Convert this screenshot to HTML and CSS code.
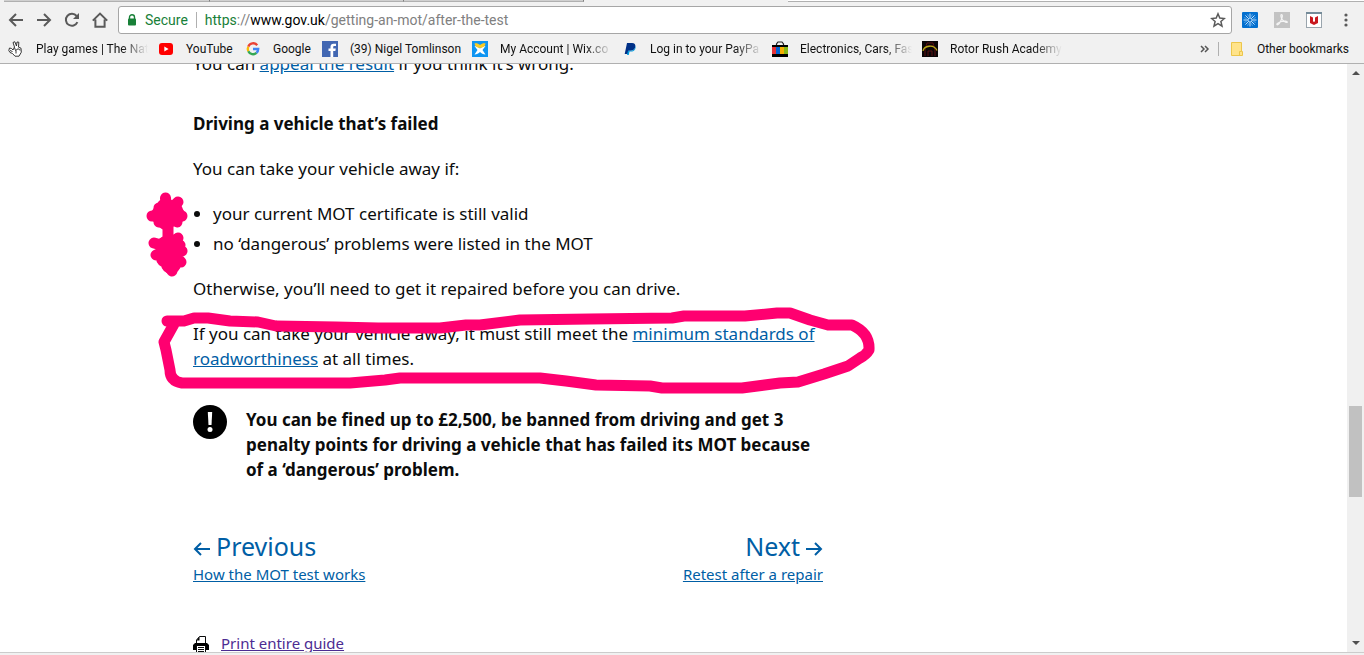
FILE: index.html
```html
<!DOCTYPE html>
<html lang="en">
<head>
    <meta charset="UTF-8">
    <meta name="viewport" content="width=device-width, initial-scale=1.0">
    <title>Getting an MOT: After the test - GOV.UK</title>
    <link rel="stylesheet" href="styles.css">
</head>
<body>
    <header class="browser">
        <div class="tab-strip">
            <span class="tab tab-first"></span>
            <span class="tab"></span>
            <span class="tab tab-last"></span>
            <span class="tab-active"></span>
            <span class="tab-rest"></span>
        </div>

        <div class="toolbar">
            <button class="nav-btn" aria-label="Back">
                <svg width="16" height="16" viewBox="0 0 16 16"><path d="M15 8H2M8 2L2 8l6 6" /></svg>
            </button>
            <button class="nav-btn" aria-label="Forward">
                <svg width="16" height="16" viewBox="0 0 16 16"><path d="M1 8h13M8 2l6 6-6 6" /></svg>
            </button>
            <button class="nav-btn" aria-label="Reload">
                <svg width="16" height="16" viewBox="0 0 16 16"><path d="M13.4 10.2A6 6 0 1 1 12.6 4" /><path class="solid" d="M15 1v6H9z" /></svg>
            </button>
            <button class="nav-btn" aria-label="Home">
                <svg width="16" height="16" viewBox="0 0 16 16"><path d="M.8 8.6L8 1.6l7.2 7M3.4 7.5v7.2h9.2V7.5" /></svg>
            </button>

            <div class="omnibox">
                <svg class="lock" width="10" height="12" viewBox="0 0 10 12"><path d="M2.5 5V3.2a2.5 2.5 0 0 1 5 0V5" fill="none" stroke="#188038" stroke-width="1.4" /><rect x="1" y="4.5" width="8" height="7" rx="1" fill="#188038" /></svg>
                <span class="secure">Secure</span>
                <a class="url" href="https://www.gov.uk/getting-an-mot/after-the-test"><span class="scheme">https</span>://<span class="host">www.gov.uk</span>/getting-an-mot/after-the-test</a>
                <button class="star" aria-label="Bookmark this page">
                    <svg width="16" height="16" viewBox="0 0 16 16"><path d="M8 1.8l1.8 4.3 4.6.4-3.5 3 1.1 4.6L8 11.7l-4 2.4 1.1-4.6-3.5-3 4.6-.4z" fill="none" stroke="#5a5a5a" stroke-width="1.5" /></svg>
                </button>
            </div>

            <div class="extensions">
                <button aria-label="Extension">
                    <svg width="16" height="16" viewBox="0 0 16 16">
                        <rect width="16" height="16" rx="1" fill="#0470cf" />
                        <path d="M8 1.5v13M1.500 8h13M3.400 3.400l9.200 9.200M3.400 12.600l9.200-9.200" stroke="#d8edff" stroke-width=".9" />
                        <path d="M5.600 2.200l1 2.500M9.400 11.300l1 2.500M2.200 10.400l2.500-1M11.300 6.600l2.500-1M2.200 5.600l2.500 1M11.300 9.400l2.500 1M5.600 13.800l1-2.500M9.400 4.700l1-2.500" stroke="#7fbcf0" stroke-width=".7" />
                        <circle cx="8" cy="8" r="2" fill="#0470cf" stroke="#d8edff" stroke-width=".7" />
                    </svg>
                </button>
                <button aria-label="Adobe Acrobat">
                    <svg width="16" height="16" viewBox="0 0 16 16">
                        <rect width="16" height="16" fill="#c3c3c3" />
                        <path d="M7.500 2.500c1.500 0 .8 3.500-.4 5.800-1.200 2.500-3 4.900-4 4.500-1.200-.7 1.500-2.600 4.600-3.300 2.800-.6 5.700-.4 5.600.6-.2 1-3-.2-4.600-1.900C7 6.500 6.300 2.600 7.500 2.500z" fill="none" stroke="#f4f4f4" stroke-width="1.200" />
                    </svg>
                </button>
                <button aria-label="McAfee WebAdvisor">
                    <svg width="16" height="16" viewBox="0 0 16 16">
                        <rect x=".5" y=".5" width="15" height="15" fill="#fff" stroke="#9aa5ad" />
                        <path d="M0 0h16v2H0z" fill="#748b99" />
                        <path d="M4.800 4.500L6.500 6h3l1.700-1.500v6L8 12.200l-3.200-1.700z" fill="none" stroke="#c8181e" stroke-width="0" />
                        <path d="M4 4l3 1.500v3.800l1 .6 1-.6V5.500L12 4v7l-4 2-4-2z" fill="#c8181e" />
                    </svg>
                </button>
                <button aria-label="Menu">
                    <svg width="16" height="16" viewBox="0 0 16 16" fill="#5a5a5a"><circle cx="8" cy="3" r="1.600" /><circle cx="8" cy="8" r="1.600" /><circle cx="8" cy="13" r="1.600" /></svg>
                </button>
            </div>
        </div>

        <nav class="bookmarks">
            <a class="bookmark clipped" href="#">
                <svg width="16" height="16" viewBox="0 0 16 16" fill="#fff" stroke="#222" stroke-width=".9"><path d="M6.500 6L5 1.500l1.800-.8L8.500 5 9 1l1.800.2-.3 5 2.500 1 .3 4-2.300 4H7L4.500 12.500 2 11.500.8 9.500 1.500 7l2 .5L5 9z" /><path d="M6.500 6.500l1 3 3-2M8 9.500v3M10.500 8.500l2 .5M2 9.500l2.500 1" fill="none" /></svg>
                <span>Play games | The Nat</span>
            </a>
            <a class="bookmark" href="#">
                <svg width="16" height="16" viewBox="0 0 16 16"><rect x="1" y="2" width="14" height="12" rx="3" fill="#f00" /><path d="M6.300 5.500v5L10.600 8z" fill="#fff" /></svg>
                <span>YouTube</span>
            </a>
            <a class="bookmark" href="#">
                <svg width="16" height="16" viewBox="0 0 16 16" fill="none" stroke-width="2.400"><path d="M12.200 4.200A5.200 5.200 0 0 0 3.300 5.700" stroke="#ea4335" /><path d="M3.300 5.700a5.200 5.200 0 0 0 0 4.600" stroke="#fbbc05" /><path d="M3.300 10.300a5.200 5.200 0 0 0 8.200 1.600" stroke="#34a853" /><path d="M11.500 11.900A5.200 5.200 0 0 0 13.200 8H8" stroke="#4285f4" /></svg>
                <span>Google</span>
            </a>
            <a class="bookmark" href="#">
                <svg width="16" height="16" viewBox="0 0 16 16"><rect width="16" height="16" fill="#4267b2" /><path d="M8.500 16v-6H6.500V7.500h2V5.700C8.500 3.700 9.700 2.700 11.500 2.700H14V5h-1.500c-1 0-1.300.4-1.300 1.200v1.300h2.600l-.4 2.500h-2.200v6z" fill="#fff" /></svg>
                <span>(39) Nigel Tomlinson</span>
            </a>
            <a class="bookmark clipped" href="#">
                <svg width="16" height="16" viewBox="0 0 16 16"><rect width="16" height="16" fill="#0f95f2" /><path d="M2.500 5c2 0 3.500 1 5.500 2.500C10 6 11.500 5 13.500 5L10.500 9l3 4.500c-2.500 0-4-1-5.500-2.500-1.500 1.500-3 2.500-5.500 2.500L5.500 9z" fill="#fff" /><path d="M2.500 2.500c2-.5 3.500 0 5.500 1.500 2-1.500 3.500-2 5.500-1.500-.3 2.500-2 4-5.500 4.500-3.500-.5-5.200-2-5.500-4.500z" fill="#fccb22" /></svg>
                <span>My Account | Wix.co</span>
            </a>
            <a class="bookmark clipped" href="#">
                <svg width="16" height="16" viewBox="0 0 16 16"><path d="M5 2h5c2.500 0 3.800 1.500 3.300 4-.5 2.600-2.300 3.800-5 3.800H6.500L5.800 13H2.700z" fill="#003087" /><path d="M13.500 4.500c.6 4-1.500 6-4.500 6H7.500L6.800 14H5l1-4.200h2.300c2.700 0 4.700-1.300 5.200-5.300z" fill="#009cde" /></svg>
                <span>Log in to your PayPa</span>
            </a>
            <a class="bookmark clipped" href="#">
                <svg width="16" height="16" viewBox="0 0 16 16"><path d="M4.500 5V3l1.500-2h4l1.500 2v2" fill="none" stroke="#222" stroke-width="1.200" /><path d="M0 4h16v12H0z" /><path d="M0 6h4v7H0z" fill="#e53238" /><path d="M4 6h4v7H4z" fill="#0064d2" /><path d="M8 6h4v7H8z" fill="#f5af02" /><path d="M12 6h4v7h-4z" fill="#86b817" /></svg>
                <span>Electronics, Cars, Fas</span>
            </a>
            <a class="bookmark clipped" href="#">
                <svg width="16" height="16" viewBox="0 0 16 16" fill="none"><rect width="16" height="16" fill="#0a0606" /><path d="M3 15V9l2-7h6l2 7v6M6 15v-5h4v5M5 5h6" stroke="#5c1013" /><path d="M1 10C2 4.500 12 3 15 9.500" stroke="#b9ab19" stroke-width="1.300" /></svg>
                <span>Rotor Rush Academy</span>
            </a>
            <div class="bookmarks-end">
                <button aria-label="More bookmarks">
                    <svg width="10" height="8" viewBox="0 0 10 8"><path d="M1 1l3 3-3 3M5 1l3 3-3 3" fill="none" stroke="#555" stroke-width="1.500" /></svg>
                </button>
                <a class="other" href="#">
                    <svg width="12" height="14" viewBox="0 0 12 14"><path d="M.5.500h10v9h1v4H.5z" fill="#ffe38a" stroke="#ecc64b" /><path d="M8.500 13.500v-4h2" fill="none" stroke="#ecc64b" /></svg>
                    Other bookmarks
                </a>
            </div>
        </nav>
    </header>

    <div class="viewport">
        <main class="page">
            <div class="guide">
                <p class="appeal">You can <a href="#">appeal the result</a> if you think it’s wrong.</p>

                <h3>Driving a vehicle that’s failed</h3>
                <p>You can take your vehicle away if:</p>
                <ul>
                    <li>your current MOT certificate is still valid</li>
                    <li>no ‘dangerous’ problems were listed in the MOT</li>
                </ul>
                <p>Otherwise, you’ll need to get it repaired before you can drive.</p>
                <p>If you can take your vehicle away, it must still meet the <a href="#">minimum standards of<br>roadworthiness</a> at all times.</p>

                <div class="warning">
                    <svg width="34" height="34" viewBox="0 0 34 34"><circle cx="17" cy="17" r="17" /><path d="M14.800 7h4.400l-.7 13h-3z" fill="#fff" /><circle cx="17" cy="24.500" r="2.500" fill="#fff" /></svg>
                    <p>You can be fined up to £2,500, be banned from driving and get 3<br>penalty points for driving a vehicle that has failed its MOT because<br>of a ‘dangerous’ problem.</p>
                </div>

                <nav class="pagination">
                    <a href="#">
                        <span class="direction"><svg width="18" height="14" viewBox="0 0 18 14"><path d="M17 7H2M8 1L2 7l6 6" /></svg>Previous</span>
                        <span class="part">How the MOT test works</span>
                    </a>
                    <a class="next" href="#">
                        <span class="direction">Next<svg width="18" height="14" viewBox="0 0 18 14"><path d="M1 7h15M10 1l6 6-6 6" /></svg></span>
                        <span class="part">Retest after a repair</span>
                    </a>
                </nav>

                <div class="print">
                    <svg width="16" height="16" viewBox="0 0 16 16"><path d="M3.500 8V4l3-3.500h6V8" fill="#fff" stroke="#0b0c0c" /><path d="M3.500 4.500h3v-4z" /><path d="M0 9l2-2h12l2 2v5H0z" /><path d="M4 10h8v6H4z" fill="#fff" /><path d="M5 11.500h6M5 13.500h6M5 15.500h6M3.500 9.500v6.500M12.500 9.500v6.500" stroke="#0b0c0c" /></svg>
                    <a href="#">Print entire guide</a>
                </div>
            </div>

            <!-- hand-drawn marker over the text -->
            <svg class="marker" width="960" height="588" viewBox="193 64 960 588">
                <path d="M167 321H184L194 318H208L230 321L258 322L276 326L336 327L378 328H440L466 325L480 325L520 320L590 319L672 318L684 316H745L777 313L790 313L810 320L828 325H852Q870 333 869 350Q866 355 860 358L848 366L824 374L798 382L780 383L742 388H662L650 386L596 385L566 381L540 378H400L385 380L350 383H182Q170 381 170 370L166 350L164 342L174 324" />
                <path d="M165.500 198L168 230M178 202L163 216M152 216H182M159 208L177 222M159 222L177 209M168 225V243M178 238L164 253M154 243L182 251M156 255L180 245M163 243L181 262M166 262L172 271M174 246L172 270" />
                <path class="blob" d="M166 208V220M161 215H175M166 246V258M171 245V264" />
            </svg>
        </main>

        <div class="scrollbar">
            <span class="arrow arrow-up"></span>
            <span class="thumb"></span>
            <span class="arrow arrow-down"></span>
        </div>
    </div>
    <div class="window-edge"></div>
</body>
</html>
```
FILE: styles.css
```css
:root {
    --chrome-bg: #f1f1f1;
    --chrome-line: #b0b0b0;
    --icon: #5a5a5a;
    --secure: #188038;
    --link: #005ea5;
    --visited: #4c2c92;
    --text: #0b0c0c;
    --marker: #ff0070;
}

* {
    margin: 0;
    padding: 0;
    box-sizing: border-box;
}

body {
    height: 100vh;
    display: flex;
    flex-direction: column;
    overflow: hidden;
    background-color: #fff;
    color: var(--text);
    font-family: "Noto Sans", sans-serif;
}

button {
    border: none;
    background: none;
    display: flex;
    cursor: pointer;
}

svg {
    flex: none;
}

/* Browser window */
.browser {
    background-color: var(--chrome-bg);
    border-bottom: 1px solid var(--chrome-line);
    font-family: Roboto, sans-serif;
}

.tab-strip {
    display: flex;
    height: 2px;
    padding-left: 4px;
}

.tab {
    width: 194px;
    background-color: #d0d0d0;
    border-right: 1px solid #808080;
    border-bottom: 1px solid var(--chrome-line);
}

.tab-first {
    width: 206px;
}

.tab-last {
    width: 180px;
}

.tab-active {
    width: 204px;
}

.tab-rest {
    flex: 1;
    background-color: #fff;
    border-bottom: 1px solid var(--chrome-line);
}

.toolbar {
    display: flex;
    align-items: center;
    height: 36px;
    padding: 0 10px 0 8px;
}

.nav-btn {
    margin-right: 12px;
}

.nav-btn svg {
    fill: none;
    stroke: var(--icon);
    stroke-width: 2;
}

.nav-btn .solid {
    fill: var(--icon);
    stroke: none;
}

.omnibox {
    flex: 1;
    display: flex;
    align-items: center;
    height: 28px;
    padding: 0 5px 0 8px;
    margin-right: 10px;
    margin-left: -2px;
    background-color: #fff;
    border: 1px solid #a6a6a6;
    border-radius: 3px;
    font-size: 14px;
    line-height: 16px;
}

.secure {
    color: var(--secure);
    margin-left: 8px;
    padding-right: 8px;
    border-right: 1px solid var(--chrome-line);
}

.url {
    flex: 1;
    margin-left: 8px;
    color: #808080;
    text-decoration: none;
}

.scheme {
    color: var(--secure);
}

.host {
    color: #000;
}

.extensions {
    display: flex;
    gap: 16px;
}

.bookmarks {
    display: grid;
    grid-template-columns: 150px 87px 77px repeat(5, 150px) 1fr;
    align-items: center;
    height: 25px;
    padding: 0 15px 3px 8px;
    font-size: 12px;
}

.bookmark,
.other {
    display: flex;
    align-items: center;
    gap: 12px;
    color: #111;
    text-decoration: none;
    white-space: nowrap;
}

.clipped span {
    max-width: 112px;
    overflow: hidden;
    -webkit-mask-image: linear-gradient(to right, #000 85px, transparent 112px);
    mask-image: linear-gradient(to right, #000 85px, transparent 112px);
}

.bookmarks-end {
    display: flex;
    align-items: center;
    justify-content: flex-end;
    gap: 8px;
}

.other {
    gap: 14px;
    padding-left: 12px;
    border-left: 1px solid var(--chrome-line);
}

/* Page */
.viewport {
    flex: 1;
    min-height: 0;
    display: flex;
    overflow: hidden;
}

.page {
    position: relative;
    flex: 1;
    max-width: 961px;
    margin: 0 auto;
    font-size: 17px;
    line-height: 25px;
}

.guide {
    max-width: 630px;
}

.guide a {
    color: var(--link);
}

.guide p,
.guide h3,
.guide ul {
    margin-bottom: 20px;
}

.guide .appeal {
    margin-top: -13px;
    margin-bottom: 35px;
}

.guide h3 {
    font-size: 17px;
    font-weight: 700;
}

.guide ul {
    padding-left: 20px;
}

.guide li + li {
    margin-top: 5px;
}

.warning {
    display: flex;
    gap: 19px;
    margin-top: 34px;
    font-weight: 700;
}

.guide .warning p {
    margin: 2px 0 0;
    white-space: nowrap;
}

.pagination {
    display: flex;
    justify-content: space-between;
    margin-top: 48px;
}

.guide .pagination a {
    text-decoration: none;
}

.pagination .next {
    text-align: right;
}

.direction {
    display: block;
    font-size: 25px;
    line-height: 32px;
}

.direction svg {
    margin-right: 5px;
    fill: none;
    stroke: var(--link);
    stroke-width: 2;
}

.next svg {
    margin: 0 0 0 5px;
}

.part {
    display: block;
    font-size: 15px;
    text-decoration: underline;
}

.print {
    display: flex;
    align-items: center;
    gap: 12px;
    margin-top: 44px;
    font-size: 15px;
}

.guide .print a {
    color: var(--visited);
}

.marker {
    position: absolute;
    top: 0;
    left: 0;
    overflow: visible;
    fill: none;
    stroke: var(--marker);
    stroke-width: 11;
    stroke-linecap: round;
    stroke-linejoin: round;
    pointer-events: none;
}

.marker .blob {
    stroke-width: 20;
}

/* Scrollbar */
.scrollbar {
    width: 17px;
    display: flex;
    flex-direction: column;
    align-items: center;
    padding: 7px 0;
    background-color: #f0f0f0;
}

.arrow {
    border: 4px solid transparent;
}

.arrow-up {
    border-top: none;
    border-bottom-color: #505050;
}

.arrow-down {
    border-bottom: none;
    border-top-color: #505050;
}

.thumb {
    width: 13px;
    height: 91px;
    margin-top: auto;
    margin-bottom: 144px;
    background-color: #c1c1c1;
}

.window-edge {
    height: 3px;
    background-color: var(--chrome-bg);
    border-top: 1px solid #ccc;
}
```
